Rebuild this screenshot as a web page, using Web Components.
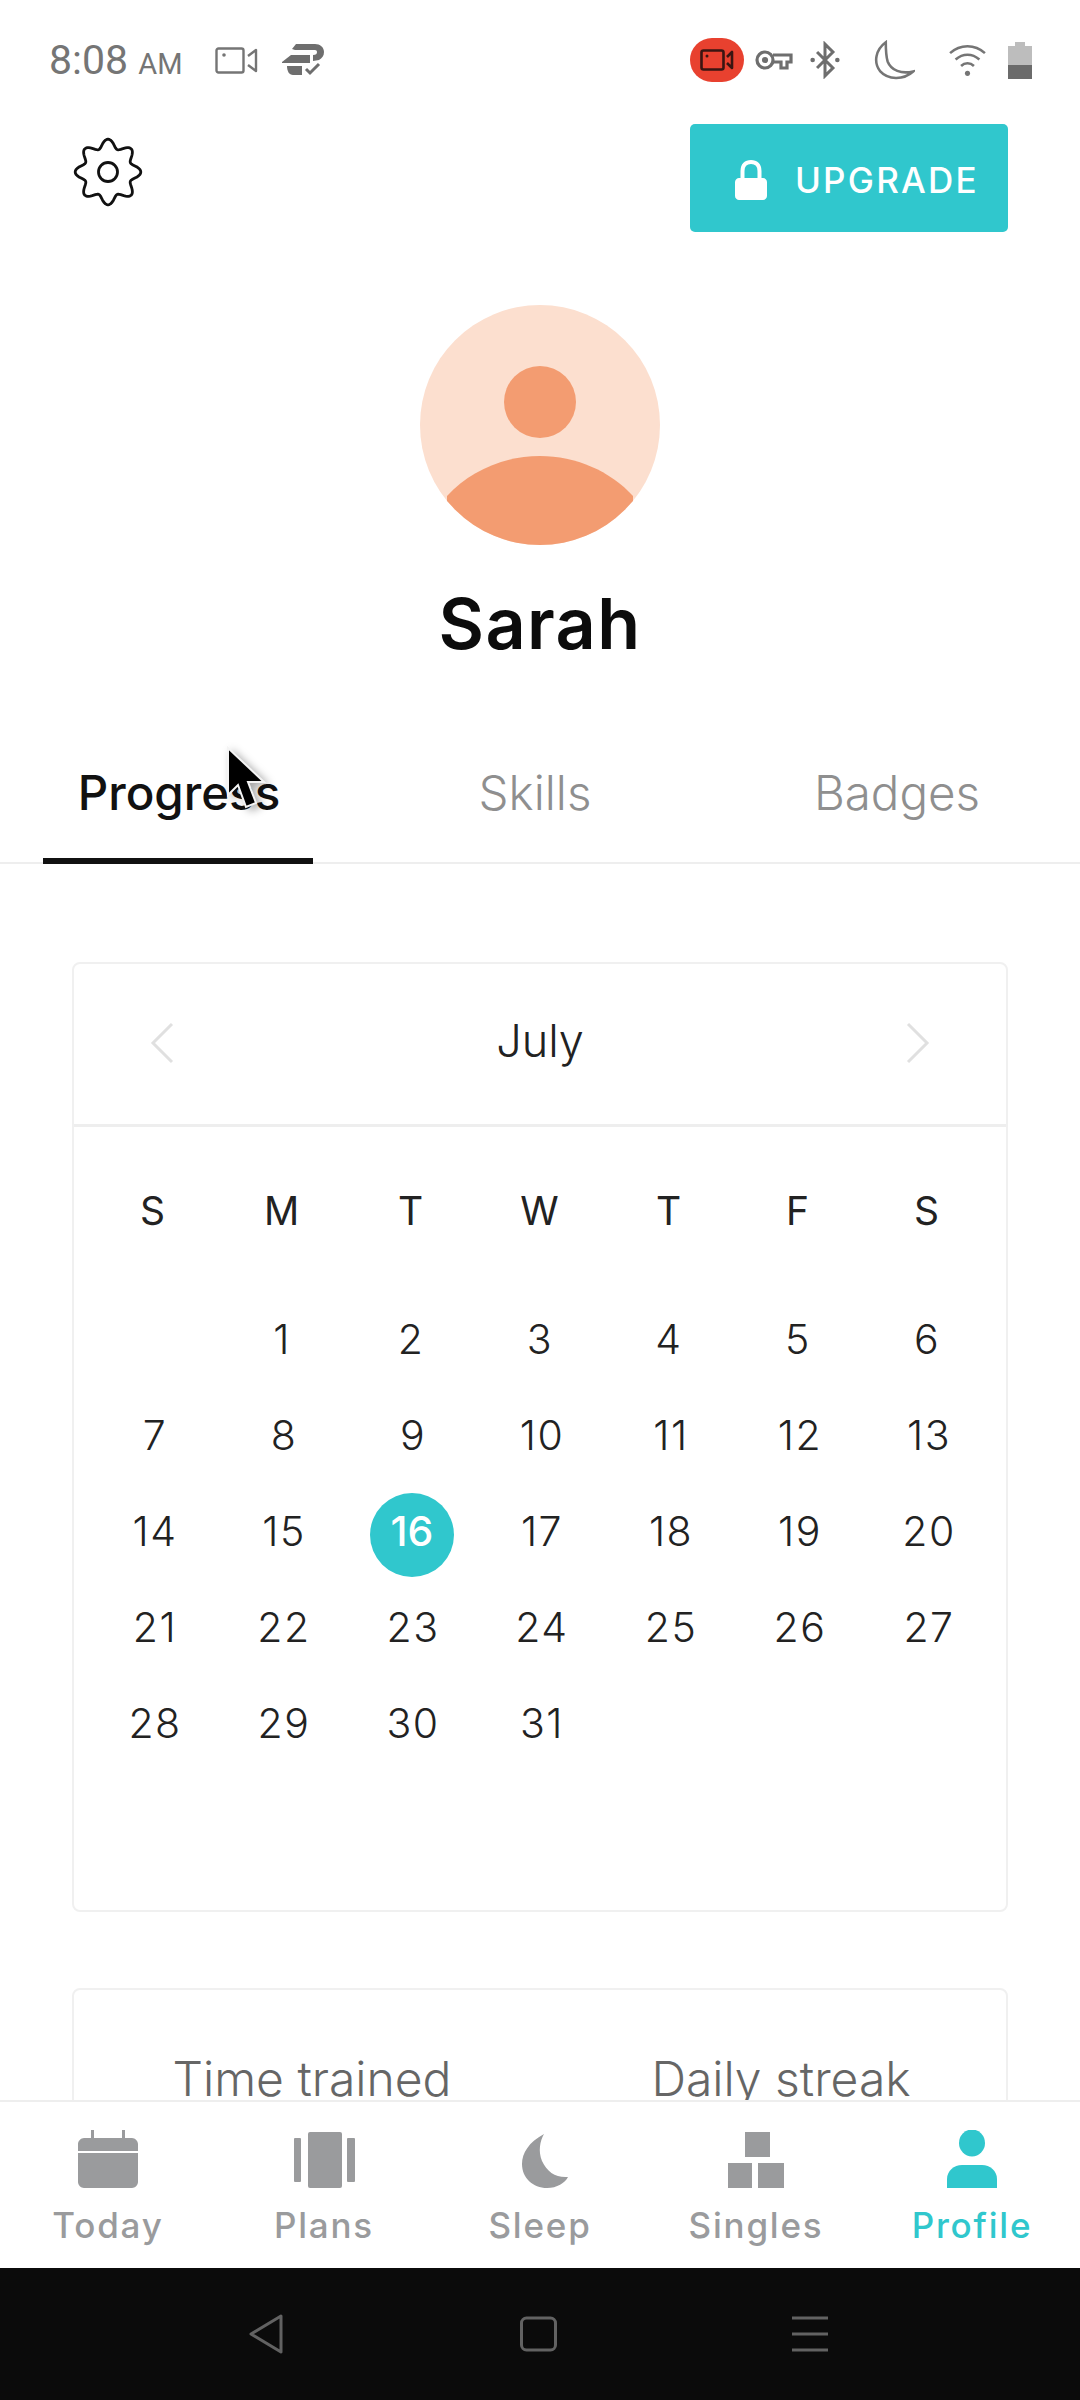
<!DOCTYPE html>
<html>
<head>
<meta charset="utf-8">
<title>Profile</title>
<style>
  html, body { margin: 0; padding: 0; background: #fff; }
  body { width: 1080px; height: 2400px; overflow: hidden; font-family: Inter, "Noto Sans", sans-serif; }
</style>
</head>
<body>
<app-shell>
  <status-bar></status-bar>
  <profile-screen></profile-screen>
  <tab-bar></tab-bar>
  <system-bar></system-bar>
  <mouse-cursor></mouse-cursor>
</app-shell>

<script>
function define(name, html) {
  customElements.define(name, class extends HTMLElement {
    constructor() {
      super();
      this.attachShadow({ mode: 'open' }).innerHTML = html;
    }
  });
}

// gear outline with 8 soft lobes, one pointing straight up
function gearPath() {
  let d = '';
  for (let i = 0; i < 160; i++) {
    const a = i / 160 * Math.PI * 2;
    const r = 28.5 + 4.3 * Math.cos(a * 8);
    d += (i ? 'L' : 'M') + (36 + r * Math.sin(a)).toFixed(2) + ' ' + (36 - r * Math.cos(a)).toFixed(2);
  }
  return d + 'z';
}

define('app-shell', `
  <style>
    :host { display: flex; flex-direction: column; width: 1080px; height: 2400px; position: relative; overflow: hidden; background: #fff; }
  </style>
  <slot></slot>
`);

define('status-bar', `
  <style>
    :host { display: flex; align-items: center; height: 120px; flex: none; padding: 0 48px 0 49px; box-sizing: border-box; color: #757575; font-family: Roboto, sans-serif; }
    .time { font-size: 41px; line-height: 1; white-space: nowrap; }
    .time small { font-size: 29px; }
    svg { display: block; flex: none; }
    .rec { width: 54px; height: 44px; border-radius: 22px; background: #e8412f; display: flex; align-items: center; justify-content: center; margin-left: auto; }
  </style>
  <span class="time">8:08 <small>AM</small></span>
  <svg style="margin-left:33px" width="43" height="27" viewBox="0 0 43 27" fill="none" stroke="#757575" stroke-width="2.4" stroke-linejoin="round"><rect x="1.5" y="1.5" width="27" height="24" rx="2"/><path d="M33 9l8-6v21l-8-6"/><circle cx="9" cy="8" r="1.8" fill="#757575" stroke="none"/></svg>
  <svg style="margin-left:24px" width="42" height="34" viewBox="0 0 42 34" fill="#6e6e6e"><path d="M14 1h19c5 0 9 3 9 8 0 4-2 6-5 8l-6 1v-6c3 0 4-1 4-3s-2-2-3-2H13l-3-1z"/><path d="M0 19l9-7h19v8H0z"/><path d="M5 23h15v9H11c-4 0-6-4-6-9z"/><path d="M24 26l4 4 9-9" fill="none" stroke="#6e6e6e" stroke-width="3"/></svg>
  <span class="rec"><svg width="34" height="22" viewBox="0 0 34 22" fill="none" stroke="#3a1512" stroke-width="2.6" stroke-linejoin="round"><rect x="1.5" y="1.5" width="22" height="19" rx="2"/><path d="M27 8l5-5v16l-5-5"/><circle cx="7" cy="7" r="1.5" fill="#3a1512" stroke="none"/></svg></span>
  <svg style="margin-left:11px" width="38" height="20" viewBox="0 0 38 20" fill="none" stroke="#6e6e6e" stroke-width="3.2"><circle cx="10" cy="10" r="8"/><circle cx="10" cy="10" r="1.5" fill="#6e6e6e"/><path d="M18 5h18v7h-4v6h-6v-6h-8"/></svg>
  <svg style="margin-left:17px" width="30" height="38" viewBox="0 0 34 40" fill="none" stroke="#6e6e6e" stroke-width="3.4"><path d="M8 11l18 18-9 9V2l9 9L8 29"/><circle cx="3" cy="20" r="2.6" fill="#6e6e6e" stroke="none"/><circle cx="31" cy="20" r="2.6" fill="#6e6e6e" stroke="none"/></svg>
  <svg style="margin-left:33px" width="42" height="41" viewBox="0 0 46 44" fill="none" stroke="#757575" stroke-width="2.8"><path d="M14 2C3 10 0 24 8 34c9 10 26 9 36 0-13 3-24-1-28-11-2-7-2-14-2-21z"/></svg>
  <svg style="margin-left:33px" width="39" height="33" viewBox="0 0 42 36" fill="none" stroke="#757575" stroke-width="2.8"><path d="M2 10c11-10 27-10 38 0M8 17c8-7 18-7 26 0M14 24c4-4 10-4 14 0"/><circle cx="21" cy="32" r="2.8" fill="#757575" stroke="none"/></svg>
  <svg style="margin-left:21px" width="24" height="37" viewBox="0 0 24 37"><path d="M7 0h10v4h7v19H0V4h7z" fill="#bdbdbd"/><rect y="23" width="24" height="14" fill="#6b6b6b"/></svg>
`);

define('profile-screen', `
  <style>
    :host { display: block; flex: 1; min-height: 0; overflow: hidden; }
    .top { display: flex; justify-content: space-between; align-items: flex-start; padding: 4px 72px 0 72px; }
    .gear { margin-top: 12px; display: block; }
    .body { padding: 98px 72px 0; display: flex; flex-direction: column; gap: 76px; }
  </style>
  <div class="top">
    <svg class="gear" width="72" height="72" viewBox="0 0 72 72" fill="none" stroke="#111" stroke-width="2.8"><path d="${gearPath()}" stroke-linejoin="round"/><circle cx="36" cy="36" r="9.5"/></svg>
    <upgrade-button></upgrade-button>
  </div>
  <profile-head></profile-head>
  <profile-tabs></profile-tabs>
  <div class="body">
    <month-calendar></month-calendar>
    <stats-card></stats-card>
  </div>
`);

define('upgrade-button', `
  <style>
    :host { display: flex; align-items: center; width: 318px; height: 108px; box-sizing: border-box; padding: 3px 0 0 45px; gap: 28px; border-radius: 5px; background: #30c7cd; color: #fff; font-size: 35px; font-weight: 500; letter-spacing: 2.2px; }
  </style>
  <svg width="32" height="40" viewBox="0 0 32 40" fill="#fff"><path d="M4 18h24c2 0 4 2 4 4v14c0 2-2 4-4 4H4c-2 0-4-2-4-4V22c0-2 2-4 4-4z"/><path d="M7.500 19v-8c0-6 3.500-9 8.500-9s8.500 3 8.500 9v8" fill="none" stroke="#fff" stroke-width="4"/></svg>
  <span>UPGRADE</span>
`);

define('profile-head', `
  <style>
    :host { display: flex; flex-direction: column; align-items: center; padding-top: 73px; }
    svg { display: block; }
    h1 { margin: 38px 0 0; font-size: 70px; line-height: 82px; font-weight: 600; letter-spacing: 1.4px; color: #0c0c0c; }
  </style>
  <svg width="240" height="240" viewBox="0 0 240 240">
    <defs><clipPath id="c"><circle cx="120" cy="120" r="120"/></clipPath></defs>
    <circle cx="120" cy="120" r="120" fill="#fcdfcf"/>
    <circle cx="120" cy="97" r="36" fill="#f39c71"/>
    <g clip-path="url(#c)"><path d="M27 191C50 166 84 151 120 151s70 15 93 40v60H27z" fill="#f39c71"/></g>
  </svg>
  <h1>Sarah</h1>
`);

define('profile-tabs', `
  <style>
    :host { display: flex; height: 129px; margin-top: 70px; padding-left: 43px; box-sizing: border-box; border-bottom: 2px solid #eeeeee; font-size: 47.5px; color: #8f8f8f; font-weight: 300; }
    span { width: 270px; height: 129px; display: flex; align-items: center; justify-content: center; box-sizing: border-box; padding: 0 0 9px 2px; border-bottom: 6px solid transparent; margin-right: 86px; }
    .on { color: #111; font-weight: 500; border-bottom-color: #111; }
  </style>
  <span class="on">Progress</span>
  <span style="margin-right:92px">Skills</span>
  <span style="margin-right:0">Badges</span>
`);

define('month-calendar', `
  <style>
    :host { display: block; height: 950px; box-sizing: border-box; border: 2px solid #f0f0f0; border-radius: 8px; color: #222; }
    .head { height: 163px; display: flex; align-items: center; justify-content: space-between; padding: 0 76px 2px 76px; border-bottom: 3px solid #eeeeee; box-sizing: border-box; font-size: 45px; font-weight: 300; }
    .head span { padding-bottom: 6px; }
    .days, .dates { display: grid; grid-template-columns: repeat(7, 129px); padding-left: 14px; justify-items: center; align-items: center; }
    .days { height: 166px; font-size: 39px; font-weight: 400; }
    .dates { grid-auto-rows: 96px; font-size: 41px; font-weight: 300; letter-spacing: 1.5px; margin-top: -2px; }
    .dates span { padding-left: 5px; }
    .dates span:nth-child(-n+7) { padding-left: 1px; }
    .dates .today { width: 84px; height: 84px; box-sizing: border-box; border-radius: 50%; background: #30c7cd; color: #fff; font-weight: 500; letter-spacing: 0; display: flex; align-items: center; justify-content: center; padding: 0 0 8px; margin: 8px 0 0 3px; }
  </style>
  <div class="head">
    <svg width="24" height="42" viewBox="0 0 24 42" fill="none" stroke="#e0e0e0" stroke-width="3"><path d="M22 2L3 21l19 19"/></svg>
    <span>July</span>
    <svg width="24" height="42" viewBox="0 0 24 42" fill="none" stroke="#e0e0e0" stroke-width="3"><path d="M2 2l19 19L2 40"/></svg>
  </div>
  <div class="days"><span>S</span><span>M</span><span>T</span><span>W</span><span>T</span><span>F</span><span>S</span></div>
  <div class="dates">
    <span></span><span>1</span><span>2</span><span>3</span><span>4</span><span>5</span><span>6</span>
    <span>7</span><span>8</span><span>9</span><span>10</span><span>11</span><span>12</span><span>13</span>
    <span>14</span><span>15</span><span class="today">16</span><span>17</span><span>18</span><span>19</span><span>20</span>
    <span>21</span><span>22</span><span>23</span><span>24</span><span>25</span><span>26</span><span>27</span>
    <span>28</span><span>29</span><span>30</span><span>31</span>
  </div>
`);

define('stats-card', `
  <style>
    :host { display: flex; height: 300px; box-sizing: border-box; border: 2px solid #f0f0f0; border-radius: 8px; padding-top: 61px; font-size: 48px; font-weight: 300; color: #666; }
    span { flex: none; text-align: center; line-height: 56px; }
  </style>
  <span style="width:476px">Time trained</span>
  <span style="width:462px">Daily streak</span>
`);

define('tab-bar', `
  <style>
    :host { display: grid; grid-template-columns: repeat(5, 216px); height: 168px; flex: none; background: #fff; border-top: 2px solid #eeeeee; box-sizing: border-box; position: relative; }
  </style>
  <tab-item label="Today"><svg width="60" height="58" viewBox="0 0 60 58" fill="currentColor"><path d="M13 0h3v8h28V0h3v8h7c3 0 6 3 6 6v7H0v-7c0-3 3-6 6-6h7zM0 23h60v29c0 3-3 6-6 6H6c-3 0-6-3-6-6z"/></svg></tab-item>
  <tab-item label="Plans"><svg width="61" height="56" viewBox="0 0 61 56" fill="currentColor"><rect y="6" width="7" height="44" rx="1"/><rect x="14" width="34" height="56" rx="2"/><rect x="53" y="6" width="8" height="44" rx="1"/></svg></tab-item>
  <tab-item label="Sleep"><svg style="margin-left:8px" width="48" height="54" viewBox="0 0 48 54" fill="currentColor"><path d="M24 0C9 8 2 19 2 30C2 44 13 54 27 54C37 54 45 49 48 43C36 44 27 38 22 27C18 17 20 7 24 0z"/></svg></tab-item>
  <tab-item label="Singles"><svg width="56" height="56" viewBox="0 0 56 56" fill="currentColor"><rect x="17" y="0" width="25" height="25"/><rect x="0" y="31" width="24" height="25"/><rect x="30" y="31" width="26" height="25"/></svg></tab-item>
  <tab-item label="Profile" active><svg width="52" height="58" viewBox="0 0 52 58" fill="currentColor"><ellipse cx="26" cy="13" rx="13" ry="13.500"/><path d="M1 58V49C1 41 8 35 16 35h20c8 0 15 6 15 14v9z"/></svg></tab-item>
`);

customElements.define('tab-item', class extends HTMLElement {
  constructor() {
    super();
    this.attachShadow({ mode: 'open' }).innerHTML = `
      <style>
        :host { display: flex; flex-direction: column; align-items: center; color: #9a9b9d; font-size: 35px; font-weight: 500; letter-spacing: 1.8px; }
        :host([active]) { color: #30c7cd; }
        .ic { height: 66px; margin-top: 20px; display: flex; align-items: flex-end; }
        .lb { margin-top: 14px; line-height: 46px; }
      </style>
      <div class="ic"><slot></slot></div>
      <div class="lb">${this.getAttribute('label')}</div>`;
  }
});

define('system-bar', `
  <style>
    :host { display: flex; height: 132px; flex: none; background: #0b0b0b; padding: 0 252px 0 249px; box-sizing: border-box; align-items: center; justify-content: space-between; }
  </style>
  <svg width="35" height="40" viewBox="0 0 35 40" fill="none" stroke="#626262" stroke-width="3" stroke-linejoin="round"><path d="M32 2L2 20l30 18z"/></svg>
  <svg width="37" height="36" viewBox="0 0 37 36" fill="none" stroke="#626262" stroke-width="3"><rect x="1.500" y="2" width="34" height="32" rx="5"/></svg>
  <svg width="36" height="36" viewBox="0 0 36 36" fill="none" stroke="#626262" stroke-width="3"><path d="M0 2h36M0 18h36M0 34h36"/></svg>
`);

define('mouse-cursor', `
  <style>
    :host { position: absolute; left: 226px; top: 746px; width: 40px; height: 64px; }
    svg { display: block; filter: drop-shadow(4px 3px 4px rgba(0,0,0,.35)); overflow: visible; }
  </style>
  <svg width="40" height="64" viewBox="0 0 40 64"><path d="M2 2v47l10-10 8 22 10-4-8-21h16z" fill="#000" stroke="#f4f4f4" stroke-width="2"/></svg>
`);
</script>
</body>
</html>
